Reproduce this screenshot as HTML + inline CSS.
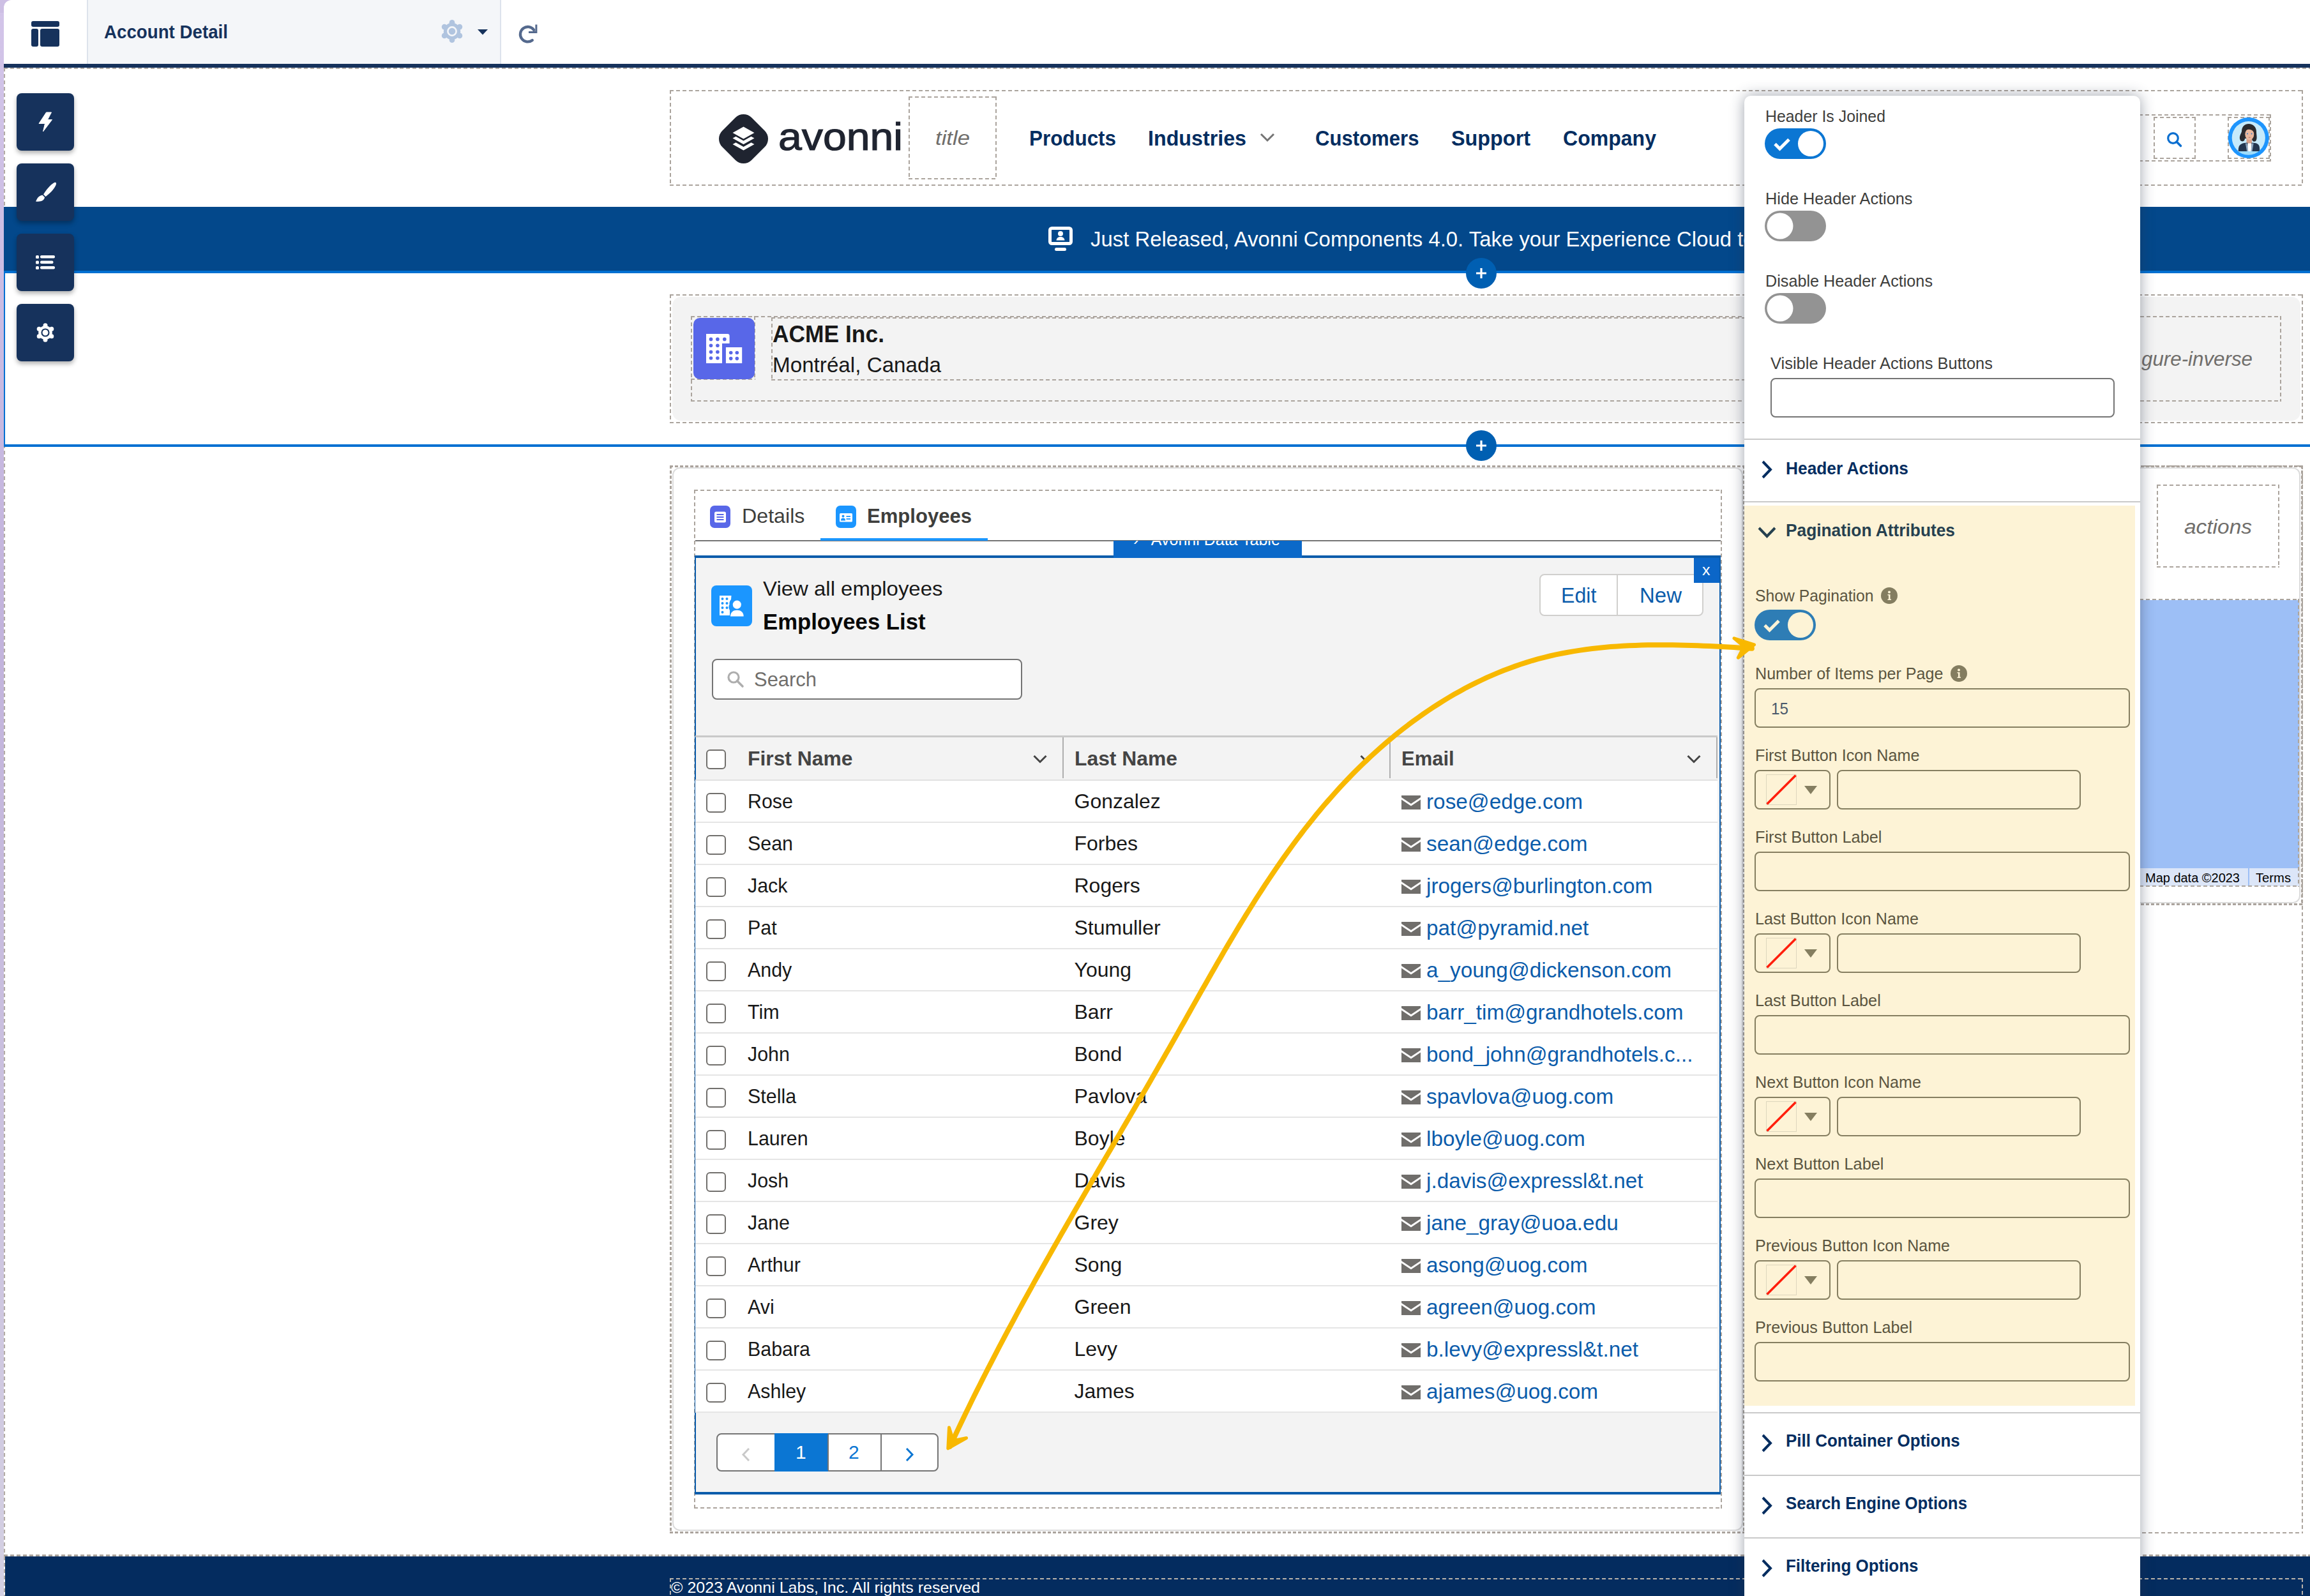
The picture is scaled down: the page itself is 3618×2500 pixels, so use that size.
<!DOCTYPE html>
<html><head><meta charset="utf-8"><style>
html,body{margin:0;padding:0;}
body{width:3618px;height:2500px;overflow:hidden;position:relative;background:#ffffff;font-family:"Liberation Sans", sans-serif;}
.tx{font-family:"Liberation Sans", sans-serif;}
</style></head><body>
<div style="position:absolute;left:0px;top:0px;width:6px;height:2500px;background:linear-gradient(180deg,#d3c5e9 0%,#c2b3dc 40%,#d4d0e2 100%);"></div>
<div style="position:absolute;left:0px;top:0px;width:20px;height:20px;background:#cdbfe4;"></div>
<div style="position:absolute;left:6px;top:0px;width:3612px;height:2500px;background:#ffffff;border-top-left-radius:12px;"></div>
<div style="position:absolute;left:136px;top:0px;width:649px;height:100px;background:#f4f6f9;border-left:2px solid #dde3ec;border-right:2px solid #dde3ec;box-sizing:border-box;"></div>
<div style="position:absolute;left:49px;top:33px;width:44px;height:9px;background:#16325c;border-radius:3px;"></div>
<div style="position:absolute;left:49px;top:45px;width:11px;height:28px;background:#16325c;border-radius:3px;"></div>
<div style="position:absolute;left:63px;top:45px;width:30px;height:28px;background:#16325c;border-radius:3px;"></div>
<div class="tx" style="position:absolute;left:163px;top:35.95px;font-size:29px;line-height:29px;color:#16325c;font-weight:bold;white-space:nowrap;transform-origin:0 0;transform:scaleX(0.9555);">Account Detail</div>
<svg style="position:absolute;left:688.5px;top:30px" width="38" height="38" viewBox="0 0 38 38"><g fill="#b0c4df"><circle cx="19" cy="19" r="13.2"/><circle cx="19.00" cy="5.20" r="4.3"/><circle cx="30.95" cy="12.10" r="4.3"/><circle cx="30.95" cy="25.90" r="4.3"/><circle cx="19.00" cy="32.80" r="4.3"/><circle cx="7.05" cy="25.90" r="4.3"/><circle cx="7.05" cy="12.10" r="4.3"/></g><circle cx="19" cy="19" r="6.6" fill="none" stroke="#f4f6f9" stroke-width="2.6"/></svg>
<svg style="position:absolute;left:748px;top:46px" width="16" height="9" viewBox="0 0 16 9"><path d="M0 0H16L8 8.5Z" fill="#16325c"/></svg>
<svg style="position:absolute;left:810px;top:36px" width="34" height="34" viewBox="0 0 34 34"><path d="M26.2 11 A11.7 11.7 0 1 0 23.8 26.97" fill="none" stroke="#54698d" stroke-width="4.3" stroke-linecap="round"/><path d="M28.4 2.6 H31.4 V16 H18 V13 H28.4 Z" fill="#54698d"/></svg>
<div style="position:absolute;left:6px;top:100px;width:3612px;height:6px;background:#16325c;"></div>
<div style="position:absolute;left:6px;top:106px;width:3700px;height:2500px;background:repeating-linear-gradient(90deg,#b3aca5 0 6px,transparent 6px 10px) 0 0/100% 2px no-repeat,repeating-linear-gradient(90deg,#b3aca5 0 6px,transparent 6px 10px) 0 100%/100% 2px no-repeat,repeating-linear-gradient(180deg,#b3aca5 0 6px,transparent 6px 10px) 0 0/2px 100% no-repeat,repeating-linear-gradient(180deg,#b3aca5 0 6px,transparent 6px 10px) 100% 0/2px 100% no-repeat;"></div>
<div style="position:absolute;left:26px;top:146px;width:90px;height:90px;background:#16325c;border-radius:8px;box-shadow:0 4px 7px rgba(0,0,0,0.3);z-index:5;"></div>
<div style="position:absolute;left:26px;top:256px;width:90px;height:90px;background:#16325c;border-radius:8px;box-shadow:0 4px 7px rgba(0,0,0,0.3);z-index:5;"></div>
<div style="position:absolute;left:26px;top:366px;width:90px;height:90px;background:#16325c;border-radius:8px;box-shadow:0 4px 7px rgba(0,0,0,0.3);z-index:5;"></div>
<div style="position:absolute;left:26px;top:476px;width:90px;height:90px;background:#16325c;border-radius:8px;box-shadow:0 4px 7px rgba(0,0,0,0.3);z-index:5;"></div>
<svg style="position:absolute;left:26px;top:146px;z-index:6" width="90" height="90" viewBox="0 0 90 90"><path d="M46.5 30 L54.5 30 L48.5 41.5 L55.5 41.5 L41.5 60 L44.5 47.5 L35 47.5 Z" fill="#fff" stroke="#fff" stroke-width="1" stroke-linejoin="round"/></svg>
<svg style="position:absolute;left:26px;top:256px;z-index:6" width="90" height="90" viewBox="0 0 90 90"><path d="M59 30 C62 29 63 31 61 35 C58 41 52 47 45.5 52 L42 48.5 C46 42 53 33 59 30 Z" fill="#fff"/><path d="M40.5 49.5 L44 53 C43.5 58 38 60.5 30 59.5 C32 56 33 51 40.5 49.5 Z" fill="#fff"/></svg>
<svg style="position:absolute;left:26px;top:366px;z-index:6" width="90" height="90" viewBox="0 0 90 90"><g fill="#fff"><rect x="30" y="34" width="5" height="5" rx="1.5"/><rect x="30" y="42.5" width="5" height="5" rx="1.5"/><rect x="30" y="51" width="5" height="5" rx="1.5"/><rect x="37" y="34" width="23" height="4.5" rx="2"/><rect x="37" y="42.5" width="20.5" height="4.5" rx="2"/><rect x="37" y="51" width="23" height="4.5" rx="2"/></g></svg>
<svg style="position:absolute;left:26px;top:476px;z-index:6" width="90" height="90" viewBox="0 0 90 90"><g fill="#fff"><circle cx="45" cy="45" r="10.8"/><circle cx="45.00" cy="33.70" r="3.5"/><circle cx="54.79" cy="39.35" r="3.5"/><circle cx="54.79" cy="50.65" r="3.5"/><circle cx="45.00" cy="56.30" r="3.5"/><circle cx="35.21" cy="50.65" r="3.5"/><circle cx="35.21" cy="39.35" r="3.5"/></g><circle cx="45" cy="45" r="5.55" fill="none" stroke="#16325c" stroke-width="2.1"/></svg>
<div style="position:absolute;left:1049px;top:141px;width:2558px;height:150px;background:repeating-linear-gradient(90deg,#aba49d 0 6px,transparent 6px 10px) 0 0/100% 2px no-repeat,repeating-linear-gradient(90deg,#aba49d 0 6px,transparent 6px 10px) 0 100%/100% 2px no-repeat,repeating-linear-gradient(180deg,#aba49d 0 6px,transparent 6px 10px) 0 0/2px 100% no-repeat,repeating-linear-gradient(180deg,#aba49d 0 6px,transparent 6px 10px) 100% 0/2px 100% no-repeat;"></div>
<svg style="position:absolute;left:1124px;top:178px" width="81" height="80" viewBox="0 0 81 80"><rect x="8" y="7" width="65" height="65" rx="18" transform="rotate(45 40.5 39.5)" fill="#1f2430"/>
<path d="M23.5 30 L40.5 20.5 L57.5 30 L40.5 39.5 Z" fill="#fff"/>
<path d="M23.5 38.5 L28.5 35.8 L40.5 42.6 L52.5 35.8 L57.5 38.5 L40.5 48 Z" fill="#fff"/>
<path d="M23.5 48 L28.5 45.3 L40.5 52.1 L52.5 45.3 L57.5 48 L40.5 57.5 Z" fill="#fff"/></svg>
<div class="tx" style="position:absolute;left:1218.5px;top:183.14px;font-size:61.5px;line-height:61.5px;color:#1f2430;font-weight:normal;white-space:nowrap;transform-origin:0 0;transform:scaleX(1.0760);-webkit-text-stroke:1.2px #1f2430;">avonni</div>
<div style="position:absolute;left:1423px;top:151px;width:138px;height:130px;background:repeating-linear-gradient(90deg,#aba49d 0 6px,transparent 6px 10px) 0 0/100% 2px no-repeat,repeating-linear-gradient(90deg,#aba49d 0 6px,transparent 6px 10px) 0 100%/100% 2px no-repeat,repeating-linear-gradient(180deg,#aba49d 0 6px,transparent 6px 10px) 0 0/2px 100% no-repeat,repeating-linear-gradient(180deg,#aba49d 0 6px,transparent 6px 10px) 100% 0/2px 100% no-repeat;"></div>
<div class="tx" style="position:absolute;left:1465px;top:200.76px;font-size:31px;line-height:31px;color:#706e6b;font-weight:normal;white-space:nowrap;transform-origin:0 0;transform:scaleX(1.1192);font-style:italic;">title</div>
<div class="tx" style="position:absolute;left:1612px;top:200.07px;font-size:33px;line-height:33px;color:#032d60;font-weight:bold;white-space:nowrap;transform-origin:0 0;transform:scaleX(0.9508);">Products</div>
<div class="tx" style="position:absolute;left:1798px;top:200.07px;font-size:33px;line-height:33px;color:#032d60;font-weight:bold;white-space:nowrap;transform-origin:0 0;transform:scaleX(0.9765);">Industries</div>
<div class="tx" style="position:absolute;left:2059.5px;top:200.07px;font-size:33px;line-height:33px;color:#032d60;font-weight:bold;white-space:nowrap;transform-origin:0 0;transform:scaleX(0.9426);">Customers</div>
<div class="tx" style="position:absolute;left:2273px;top:200.07px;font-size:33px;line-height:33px;color:#032d60;font-weight:bold;white-space:nowrap;transform-origin:0 0;transform:scaleX(0.9804);">Support</div>
<div class="tx" style="position:absolute;left:2448px;top:200.07px;font-size:33px;line-height:33px;color:#032d60;font-weight:bold;white-space:nowrap;transform-origin:0 0;transform:scaleX(0.9710);">Company</div>
<svg style="position:absolute;left:1972px;top:205px" width="26" height="21" viewBox="0 0 26 21"><path d="M3 5 L13 15 L23 5" fill="none" stroke="#747474" stroke-width="3"/></svg>
<div style="position:absolute;left:2900px;top:179px;width:657px;height:74px;background:repeating-linear-gradient(90deg,#aba49d 0 6px,transparent 6px 10px) 0 0/100% 2px no-repeat,repeating-linear-gradient(90deg,#aba49d 0 6px,transparent 6px 10px) 0 100%/100% 2px no-repeat,repeating-linear-gradient(180deg,#aba49d 0 6px,transparent 6px 10px) 0 0/2px 100% no-repeat,repeating-linear-gradient(180deg,#aba49d 0 6px,transparent 6px 10px) 100% 0/2px 100% no-repeat;"></div>
<div style="position:absolute;left:3373px;top:183px;width:66px;height:66px;background:repeating-linear-gradient(90deg,#aba49d 0 6px,transparent 6px 10px) 0 0/100% 2px no-repeat,repeating-linear-gradient(90deg,#aba49d 0 6px,transparent 6px 10px) 0 100%/100% 2px no-repeat,repeating-linear-gradient(180deg,#aba49d 0 6px,transparent 6px 10px) 0 0/2px 100% no-repeat,repeating-linear-gradient(180deg,#aba49d 0 6px,transparent 6px 10px) 100% 0/2px 100% no-repeat;"></div>
<svg style="position:absolute;left:3392px;top:205px" width="28" height="28" viewBox="0 0 28 28"><circle cx="11.5" cy="11.5" r="7.8" fill="none" stroke="#0b6fd0" stroke-width="3.2"/><path d="M17 17 L23.5 23.5" stroke="#0b6fd0" stroke-width="3.6" stroke-linecap="round"/></svg>
<div style="position:absolute;left:3489px;top:183px;width:66px;height:66px;background:repeating-linear-gradient(90deg,#aba49d 0 6px,transparent 6px 10px) 0 0/100% 2px no-repeat,repeating-linear-gradient(90deg,#aba49d 0 6px,transparent 6px 10px) 0 100%/100% 2px no-repeat,repeating-linear-gradient(180deg,#aba49d 0 6px,transparent 6px 10px) 0 0/2px 100% no-repeat,repeating-linear-gradient(180deg,#aba49d 0 6px,transparent 6px 10px) 100% 0/2px 100% no-repeat;"></div>
<svg style="position:absolute;left:3489px;top:184px" width="65" height="65" viewBox="0 0 65 65"><defs><clipPath id="avc"><circle cx="32.5" cy="32.5" r="26.3"/></clipPath></defs>
<circle cx="32.8" cy="32" r="32" fill="#1e95fd"/><circle cx="32.8" cy="32" r="26.1" fill="#c6eafb"/>
<g clip-path="url(#avc)"><rect x="0" y="52" width="65" height="13" fill="#9fdcfa"/>
<path d="M20 36 C17 30 21 26 22 22 C22 14 27 10 33 10 C40 10 45 15 45 22 C45 28 47 33 44 37 C41 39 38 37 38 33 L27 33 C27 37 23 39 20 36 Z" fill="#2a2a2e"/>
<rect x="29.5" y="32" width="8.5" height="9" fill="#d9a28b"/>
<ellipse cx="34.3" cy="26.3" rx="7" ry="9" fill="#e9b89e"/>
<path d="M26 23 C26 15 35 12 41.5 18.5 C40.5 22 41 25 42 28 C42 21 37 17.5 31 19 C28.5 19.8 27 21 26 23 Z" fill="#2a2a2e"/>
<circle cx="31" cy="25.5" r="1" fill="#2d7bd0"/><circle cx="37.6" cy="25.5" r="1" fill="#2d7bd0"/><ellipse cx="34.3" cy="31.3" rx="1.8" ry="0.9" fill="#c98a7c"/>
<path d="M16.8 53 C16.8 44 19 41.5 26 40 L31 39.5 L34.3 44 L37.6 39.5 L43 40 C49.5 41.5 50.3 44 50.3 53 Z" fill="#24364f"/>
<path d="M31.3 40.5 H37.5 V53 H31.3 Z" fill="#fff"/>
<path d="M29 40.5 L31.3 53 M39.5 40.5 L37.4 53" stroke="#8fa9c3" stroke-width="2.2"/></g></svg>
<div style="position:absolute;left:6px;top:324px;width:3612px;height:100px;background:#03488b;"></div>
<svg style="position:absolute;left:1640px;top:353px" width="42" height="42" viewBox="0 0 42 42"><rect x="4.5" y="4.5" width="33" height="24" rx="3" fill="none" stroke="#fff" stroke-width="5"/>
<circle cx="21" cy="13" r="4" fill="#fff"/><path d="M14.5 23.5 C15 19.5 17.5 18 21 18 C24.5 18 27 19.5 27.5 23.5 Z" fill="#fff"/><rect x="12" y="35" width="18" height="5" rx="2.5" fill="#fff"/></svg>
<div class="tx" style="position:absolute;left:1708px;top:357.77px;font-size:33px;line-height:33px;color:#ffffff;font-weight:normal;white-space:nowrap;transform-origin:0 0;transform:scaleX(0.9963);">Just Released, Avonni Components 4.0. Take your Experience Cloud to the next level</div>
<div style="position:absolute;left:6px;top:424px;width:3612px;height:276px;border-top:4px solid #0070d2;border-bottom:4px solid #0070d2;border-left:2px solid #0070d2;box-sizing:border-box;"></div>
<div style="position:absolute;left:1049px;top:461px;width:2558px;height:202px;background:repeating-linear-gradient(90deg,#aba49d 0 6px,transparent 6px 10px) 0 0/100% 2px no-repeat,repeating-linear-gradient(90deg,#aba49d 0 6px,transparent 6px 10px) 0 100%/100% 2px no-repeat,repeating-linear-gradient(180deg,#aba49d 0 6px,transparent 6px 10px) 0 0/2px 100% no-repeat,repeating-linear-gradient(180deg,#aba49d 0 6px,transparent 6px 10px) 100% 0/2px 100% no-repeat;"></div>
<div style="position:absolute;left:1053px;top:465px;width:2550px;height:194px;background:#f3f3f3;border-radius:14px;"></div>
<div style="position:absolute;left:1082px;top:495px;width:2491px;height:134px;background:repeating-linear-gradient(90deg,#aba49d 0 6px,transparent 6px 10px) 0 0/100% 2px no-repeat,repeating-linear-gradient(90deg,#aba49d 0 6px,transparent 6px 10px) 0 100%/100% 2px no-repeat,repeating-linear-gradient(180deg,#aba49d 0 6px,transparent 6px 10px) 0 0/2px 100% no-repeat,repeating-linear-gradient(180deg,#aba49d 0 6px,transparent 6px 10px) 100% 0/2px 100% no-repeat;"></div>
<div style="position:absolute;left:1082px;top:495px;width:101px;height:100px;background:repeating-linear-gradient(90deg,#aba49d 0 6px,transparent 6px 10px) 0 0/100% 2px no-repeat,repeating-linear-gradient(90deg,#aba49d 0 6px,transparent 6px 10px) 0 100%/100% 2px no-repeat,repeating-linear-gradient(180deg,#aba49d 0 6px,transparent 6px 10px) 0 0/2px 100% no-repeat,repeating-linear-gradient(180deg,#aba49d 0 6px,transparent 6px 10px) 100% 0/2px 100% no-repeat;"></div>
<div style="position:absolute;left:1086px;top:498px;width:96px;height:96px;background:#5867e8;border-radius:10px;"></div>
<svg style="position:absolute;left:1086px;top:498px" width="96" height="96" viewBox="0 0 96 96"><g fill="#fff"><path d="M20 25 H53.5 Q56.6 25 56.6 28 V40 H45 V71 H20 Z"/><rect x="50.9" y="46" width="25.3" height="25"/></g>
<g fill="#5867e8"><circle cx="27.5" cy="33.4" r="2.8"/><circle cx="37.9" cy="33.4" r="2.8"/><circle cx="48.8" cy="33.4" r="2.8"/><circle cx="27.5" cy="43.3" r="2.8"/><circle cx="37.9" cy="43.3" r="2.8"/><circle cx="27.5" cy="53.2" r="2.8"/><circle cx="37.9" cy="53.2" r="2.8"/><circle cx="27.5" cy="63" r="2.8"/><circle cx="37.9" cy="63" r="2.8"/><circle cx="58.7" cy="54.5" r="2.8"/><circle cx="68.3" cy="54.5" r="2.8"/><circle cx="58.7" cy="63.6" r="2.8"/><circle cx="68.3" cy="63.6" r="2.8"/></g></svg>
<div style="position:absolute;left:1208px;top:497px;width:2000px;height:99px;background:repeating-linear-gradient(90deg,#aba49d 0 6px,transparent 6px 10px) 0 0/100% 2px no-repeat,repeating-linear-gradient(90deg,#aba49d 0 6px,transparent 6px 10px) 0 100%/100% 2px no-repeat,repeating-linear-gradient(180deg,#aba49d 0 6px,transparent 6px 10px) 0 0/2px 100% no-repeat,repeating-linear-gradient(180deg,#aba49d 0 6px,transparent 6px 10px) 100% 0/2px 100% no-repeat;"></div>
<div class="tx" style="position:absolute;left:1210px;top:505.28px;font-size:37px;line-height:37px;color:#181818;font-weight:bold;white-space:nowrap;transform-origin:0 0;transform:scaleX(0.9564);">ACME Inc.</div>
<div class="tx" style="position:absolute;left:1210px;top:555.07px;font-size:33px;line-height:33px;color:#181818;font-weight:normal;white-space:nowrap;transform-origin:0 0;transform:scaleX(1.0064);">Montréal, Canada</div>
<div class="tx" style="position:absolute;left:3354px;top:546.76px;font-size:31px;line-height:31px;color:#706e6b;font-weight:normal;white-space:nowrap;transform-origin:0 0;transform:scaleX(1.0098);font-style:italic;">gure-inverse</div>
<div style="position:absolute;left:1049px;top:729px;width:1684px;height:1673px;background:repeating-linear-gradient(90deg,#aba49d 0 5px,transparent 5px 8px) 0 0/100% 3px no-repeat,repeating-linear-gradient(90deg,#aba49d 0 5px,transparent 5px 8px) 0 100%/100% 3px no-repeat,repeating-linear-gradient(180deg,#aba49d 0 5px,transparent 5px 8px) 0 0/3px 100% no-repeat,repeating-linear-gradient(180deg,#aba49d 0 5px,transparent 5px 8px) 100% 0/3px 100% no-repeat;"></div>
<div style="position:absolute;left:1053px;top:732px;width:1677px;height:1666px;background:#fff;border:2px solid #dcdcdc;border-radius:12px;box-sizing:border-box;"></div>
<div style="position:absolute;left:2745px;top:729px;width:862px;height:1673px;background:repeating-linear-gradient(90deg,#aba49d 0 6px,transparent 6px 10px) 0 0/100% 2px no-repeat,repeating-linear-gradient(90deg,#aba49d 0 6px,transparent 6px 10px) 0 100%/100% 2px no-repeat,repeating-linear-gradient(180deg,#aba49d 0 6px,transparent 6px 10px) 0 0/2px 100% no-repeat,repeating-linear-gradient(180deg,#aba49d 0 6px,transparent 6px 10px) 100% 0/2px 100% no-repeat;"></div>
<div style="position:absolute;left:2745px;top:729px;width:862px;height:689px;background:repeating-linear-gradient(90deg,#aba49d 0 5px,transparent 5px 8px) 0 0/100% 3px no-repeat,repeating-linear-gradient(90deg,#aba49d 0 5px,transparent 5px 8px) 0 100%/100% 3px no-repeat,repeating-linear-gradient(180deg,#aba49d 0 5px,transparent 5px 8px) 0 0/3px 100% no-repeat,repeating-linear-gradient(180deg,#aba49d 0 5px,transparent 5px 8px) 100% 0/3px 100% no-repeat;"></div>
<div style="position:absolute;left:2749px;top:732px;width:854px;height:683px;background:#fff;border:2px solid #dcdcdc;border-radius:12px;box-sizing:border-box;"></div>
<div style="position:absolute;left:3378px;top:759px;width:192px;height:130px;background:repeating-linear-gradient(90deg,#aba49d 0 6px,transparent 6px 10px) 0 0/100% 2px no-repeat,repeating-linear-gradient(90deg,#aba49d 0 6px,transparent 6px 10px) 0 100%/100% 2px no-repeat,repeating-linear-gradient(180deg,#aba49d 0 6px,transparent 6px 10px) 0 0/2px 100% no-repeat,repeating-linear-gradient(180deg,#aba49d 0 6px,transparent 6px 10px) 100% 0/2px 100% no-repeat;"></div>
<div class="tx" style="position:absolute;left:3421px;top:809.76px;font-size:31px;line-height:31px;color:#706e6b;font-weight:normal;white-space:nowrap;transform-origin:0 0;transform:scaleX(1.0791);font-style:italic;">actions</div>
<div style="position:absolute;left:2751px;top:940px;width:850px;height:420px;background:#9dbff6;"></div>
<div style="position:absolute;left:2751px;top:1360px;width:850px;height:28px;background:#dce6f8;"></div>
<div style="position:absolute;left:3521px;top:1360px;width:2px;height:28px;background:#9dbff6;"></div>
<div class="tx" style="position:absolute;left:3360px;top:1365.07px;font-size:20px;line-height:20px;color:#000;font-weight:normal;white-space:nowrap;transform-origin:0 0;transform:scaleX(0.9987);">Map data ©2023</div>
<div class="tx" style="position:absolute;left:3533px;top:1365.07px;font-size:20px;line-height:20px;color:#000;font-weight:normal;white-space:nowrap;transform-origin:0 0;transform:scaleX(1.0100);">Terms</div>
<div style="position:absolute;left:2751px;top:938px;width:850px;height:451px;background:repeating-linear-gradient(90deg,#aba49d 0 6px,transparent 6px 10px) 0 0/100% 2px no-repeat,repeating-linear-gradient(90deg,#aba49d 0 6px,transparent 6px 10px) 0 100%/100% 2px no-repeat,repeating-linear-gradient(180deg,#aba49d 0 6px,transparent 6px 10px) 0 0/2px 100% no-repeat,repeating-linear-gradient(180deg,#aba49d 0 6px,transparent 6px 10px) 100% 0/2px 100% no-repeat;"></div>
<div style="position:absolute;left:1087px;top:767px;width:1610px;height:1596px;background:repeating-linear-gradient(90deg,#aba49d 0 6px,transparent 6px 10px) 0 0/100% 2px no-repeat,repeating-linear-gradient(90deg,#aba49d 0 6px,transparent 6px 10px) 0 100%/100% 2px no-repeat,repeating-linear-gradient(180deg,#aba49d 0 6px,transparent 6px 10px) 0 0/2px 100% no-repeat,repeating-linear-gradient(180deg,#aba49d 0 6px,transparent 6px 10px) 100% 0/2px 100% no-repeat;"></div>
<div style="position:absolute;left:1112px;top:792px;width:32px;height:35px;background:#5867e8;border-radius:7px;"></div>
<svg style="position:absolute;left:1112px;top:792px" width="32" height="35" viewBox="0 0 32 35"><rect x="7" y="9.5" width="18" height="17" rx="2.5" fill="#fff"/><g fill="#5867e8"><rect x="10.5" y="13" width="11" height="2"/><rect x="10.5" y="17" width="11" height="2"/><rect x="10.5" y="21" width="11" height="2"/></g></svg>
<div class="tx" style="position:absolute;left:1161.6px;top:791.91px;font-size:32px;line-height:32px;color:#3e3e3c;font-weight:normal;white-space:nowrap;transform-origin:0 0;transform:scaleX(1.0060);">Details</div>
<div style="position:absolute;left:1309px;top:792px;width:32px;height:35px;background:#1b96ff;border-radius:7px;"></div>
<svg style="position:absolute;left:1309px;top:792px" width="32" height="35" viewBox="0 0 32 35"><rect x="6" y="12" width="20" height="13.5" rx="1.5" fill="#fff"/><g fill="#1b96ff"><circle cx="11.5" cy="16.5" r="2"/><path d="M8 23.5 C8 20 9.5 19.5 11.5 19.5 C13.5 19.5 15 20 15 23.5Z"/><rect x="16.5" y="16" width="6.5" height="1.8"/><rect x="16.5" y="20" width="6.5" height="1.8"/></g></svg>
<div class="tx" style="position:absolute;left:1358px;top:791.91px;font-size:32px;line-height:32px;color:#3e3e3c;font-weight:bold;white-space:nowrap;transform-origin:0 0;transform:scaleX(0.9706);">Employees</div>
<div style="position:absolute;left:1089px;top:846px;width:1606px;height:2px;background:#747474;"></div>
<div style="position:absolute;left:1285px;top:843px;width:262px;height:4px;background:#1b96ff;"></div>
<div style="position:absolute;left:1088px;top:870px;width:1607px;height:1471px;background:#f3f3f3;border:2px solid #0b5cab;border-top-width:4px;border-bottom-width:4px;box-sizing:border-box;"></div>
<div style="position:absolute;left:1744px;top:847px;width:295px;height:27px;overflow:hidden;background:#0b69c9;"><div style="position:absolute;left:31px;top:-17px;font-size:25px;line-height:30px;color:#fff;white-space:nowrap;">&#8250;&nbsp;&nbsp; Avonni Data Table</div></div>
<div style="position:absolute;left:1114px;top:917px;width:64px;height:64px;background:#1b96ff;border-radius:8px;"></div>
<svg style="position:absolute;left:1114px;top:917px" width="64" height="64" viewBox="0 0 64 64"><path d="M13 16 H31.5 L31 22 C29 24 28 27 28.5 30 C27 32 27 36 29 39 L29 47 H13 Z" fill="#fff"/>
<g fill="#1b96ff"><circle cx="17.5" cy="21" r="2"/><circle cx="24.5" cy="21" r="2"/><circle cx="17.5" cy="28" r="2"/><circle cx="24.5" cy="28" r="2"/><circle cx="17.5" cy="35" r="2"/><circle cx="24.5" cy="35" r="2"/><circle cx="17.5" cy="42" r="2"/></g>
<circle cx="40.3" cy="30.1" r="6.6" fill="#fff"/><path d="M30 48.5 C30 42 34.5 38.8 40.3 38.8 C46.1 38.8 50.7 42 50.7 48.5 Z" fill="#fff"/></svg>
<div class="tx" style="position:absolute;left:1194.5px;top:905.91px;font-size:32px;line-height:32px;color:#181818;font-weight:normal;white-space:nowrap;transform-origin:0 0;transform:scaleX(1.0299);">View all employees</div>
<div class="tx" style="position:absolute;left:1194.5px;top:956.07px;font-size:35px;line-height:35px;color:#080808;font-weight:bold;white-space:nowrap;transform-origin:0 0;transform:scaleX(0.9912);">Employees List</div>
<div style="position:absolute;left:2411px;top:899px;width:257px;height:66px;background:#fff;border:2px solid #d0cfcd;border-radius:8px;box-sizing:border-box;"></div>
<div style="position:absolute;left:2532px;top:900px;width:2px;height:64px;background:#d0cfcd;"></div>
<div class="tx" style="position:absolute;left:2444.6px;top:915.67px;font-size:33px;line-height:33px;color:#0b5cab;font-weight:normal;white-space:nowrap;transform-origin:0 0;transform:scaleX(0.9741);">Edit</div>
<div class="tx" style="position:absolute;left:2568px;top:915.67px;font-size:33px;line-height:33px;color:#0b5cab;font-weight:normal;white-space:nowrap;transform-origin:0 0;transform:scaleX(0.9995);">New</div>
<div style="position:absolute;left:2653px;top:874px;width:40px;height:39px;background:#0b66c8;"></div>
<div class="tx" style="position:absolute;left:2666px;top:881.18px;font-size:24px;line-height:24px;color:#fff;font-weight:normal;white-space:nowrap;transform-origin:0 0;transform:scaleX(1.0417);">x</div>
<div style="position:absolute;left:1115px;top:1032px;width:486px;height:64px;background:#fff;border:2px solid #747474;border-radius:8px;box-sizing:border-box;"></div>
<svg style="position:absolute;left:1137px;top:1049px" width="30" height="30" viewBox="0 0 30 30"><circle cx="12" cy="12" r="8" fill="none" stroke="#aeaeae" stroke-width="3.2"/><path d="M17.5 17.5 L26 26" stroke="#aeaeae" stroke-width="3.6" stroke-linecap="round"/></svg>
<div class="tx" style="position:absolute;left:1180.6px;top:1047.91px;font-size:32px;line-height:32px;color:#706e6b;font-weight:normal;white-space:nowrap;transform-origin:0 0;transform:scaleX(0.9666);">Search</div>
<div style="position:absolute;left:1089px;top:1152px;width:1601px;height:3px;background:#c9c9c9;"></div>
<div style="position:absolute;left:1089px;top:1221px;width:1601px;height:2px;background:#e1e1e1;"></div>
<div style="position:absolute;left:1664px;top:1155px;width:2px;height:64px;background:#aeaeae;"></div>
<div style="position:absolute;left:2176px;top:1155px;width:2px;height:64px;background:#aeaeae;"></div>
<div style="position:absolute;left:2688px;top:1155px;width:2px;height:64px;background:#aeaeae;"></div>
<div class="tx" style="position:absolute;left:1171px;top:1171.91px;font-size:32px;line-height:32px;color:#444444;font-weight:bold;white-space:nowrap;transform-origin:0 0;transform:scaleX(0.9946);">First Name</div>
<div class="tx" style="position:absolute;left:1682.5px;top:1171.91px;font-size:32px;line-height:32px;color:#444444;font-weight:bold;white-space:nowrap;transform-origin:0 0;transform:scaleX(0.9948);">Last Name</div>
<div class="tx" style="position:absolute;left:2195px;top:1171.91px;font-size:32px;line-height:32px;color:#444444;font-weight:bold;white-space:nowrap;transform-origin:0 0;transform:scaleX(0.9687);">Email</div>
<svg style="position:absolute;left:1618px;top:1182px" width="22" height="16" viewBox="0 0 22 16"><path d="M1.5 2 L11 11.5 L20.5 2" fill="none" stroke="#444" stroke-width="3"/></svg>
<svg style="position:absolute;left:2130px;top:1182px" width="22" height="16" viewBox="0 0 22 16"><path d="M1.5 2 L11 11.5 L20.5 2" fill="none" stroke="#444" stroke-width="3"/></svg>
<svg style="position:absolute;left:2642px;top:1182px" width="22" height="16" viewBox="0 0 22 16"><path d="M1.5 2 L11 11.5 L20.5 2" fill="none" stroke="#444" stroke-width="3"/></svg>
<div style="position:absolute;left:1106px;top:1174px;width:31px;height:31px;border:2px solid #716f6c;border-radius:6px;box-sizing:border-box;background:#fff;"></div>
<div style="position:absolute;left:1089px;top:1223px;width:1601px;height:64px;background:#fff;"></div>
<div style="position:absolute;left:1089px;top:1287px;width:1601px;height:2px;background:#e5e5e5;"></div>
<div style="position:absolute;left:1106px;top:1242px;width:31px;height:31px;border:2px solid #716f6c;border-radius:6px;box-sizing:border-box;background:#fff;"></div>
<div class="tx" style="position:absolute;left:1171px;top:1239.41px;font-size:32px;line-height:32px;color:#181818;font-weight:normal;white-space:nowrap;transform-origin:0 0;transform:scaleX(0.95);">Rose</div>
<div class="tx" style="position:absolute;left:1682.5px;top:1239.41px;font-size:32px;line-height:32px;color:#181818;font-weight:normal;white-space:nowrap;transform-origin:0 0;transform:scaleX(1.0);">Gonzalez</div>
<svg style="position:absolute;left:2195px;top:1246px" width="30" height="22" viewBox="0 0 30 22"><path d="M0 0 H30 V3 L15 13 L0 3 Z" fill="#706e6b"/><path d="M0 6.5 L15 16.5 L30 6.5 V22 H0 Z" fill="#706e6b"/></svg>
<div class="tx" style="position:absolute;left:2234px;top:1238.57px;font-size:33px;line-height:33px;color:#0b5cab;font-weight:normal;white-space:nowrap;transform-origin:0 0;transform:scaleX(1.01);">rose@edge.com</div>
<div style="position:absolute;left:1089px;top:1289px;width:1601px;height:64px;background:#fff;"></div>
<div style="position:absolute;left:1089px;top:1353px;width:1601px;height:2px;background:#e5e5e5;"></div>
<div style="position:absolute;left:1106px;top:1308px;width:31px;height:31px;border:2px solid #716f6c;border-radius:6px;box-sizing:border-box;background:#fff;"></div>
<div class="tx" style="position:absolute;left:1171px;top:1305.41px;font-size:32px;line-height:32px;color:#181818;font-weight:normal;white-space:nowrap;transform-origin:0 0;transform:scaleX(0.95);">Sean</div>
<div class="tx" style="position:absolute;left:1682.5px;top:1305.41px;font-size:32px;line-height:32px;color:#181818;font-weight:normal;white-space:nowrap;transform-origin:0 0;transform:scaleX(1.0);">Forbes</div>
<svg style="position:absolute;left:2195px;top:1312px" width="30" height="22" viewBox="0 0 30 22"><path d="M0 0 H30 V3 L15 13 L0 3 Z" fill="#706e6b"/><path d="M0 6.5 L15 16.5 L30 6.5 V22 H0 Z" fill="#706e6b"/></svg>
<div class="tx" style="position:absolute;left:2234px;top:1304.57px;font-size:33px;line-height:33px;color:#0b5cab;font-weight:normal;white-space:nowrap;transform-origin:0 0;transform:scaleX(1.01);">sean@edge.com</div>
<div style="position:absolute;left:1089px;top:1355px;width:1601px;height:64px;background:#fff;"></div>
<div style="position:absolute;left:1089px;top:1419px;width:1601px;height:2px;background:#e5e5e5;"></div>
<div style="position:absolute;left:1106px;top:1374px;width:31px;height:31px;border:2px solid #716f6c;border-radius:6px;box-sizing:border-box;background:#fff;"></div>
<div class="tx" style="position:absolute;left:1171px;top:1371.41px;font-size:32px;line-height:32px;color:#181818;font-weight:normal;white-space:nowrap;transform-origin:0 0;transform:scaleX(0.95);">Jack</div>
<div class="tx" style="position:absolute;left:1682.5px;top:1371.41px;font-size:32px;line-height:32px;color:#181818;font-weight:normal;white-space:nowrap;transform-origin:0 0;transform:scaleX(1.0);">Rogers</div>
<svg style="position:absolute;left:2195px;top:1378px" width="30" height="22" viewBox="0 0 30 22"><path d="M0 0 H30 V3 L15 13 L0 3 Z" fill="#706e6b"/><path d="M0 6.5 L15 16.5 L30 6.5 V22 H0 Z" fill="#706e6b"/></svg>
<div class="tx" style="position:absolute;left:2234px;top:1370.57px;font-size:33px;line-height:33px;color:#0b5cab;font-weight:normal;white-space:nowrap;transform-origin:0 0;transform:scaleX(1.01);">jrogers@burlington.com</div>
<div style="position:absolute;left:1089px;top:1421px;width:1601px;height:64px;background:#fff;"></div>
<div style="position:absolute;left:1089px;top:1485px;width:1601px;height:2px;background:#e5e5e5;"></div>
<div style="position:absolute;left:1106px;top:1440px;width:31px;height:31px;border:2px solid #716f6c;border-radius:6px;box-sizing:border-box;background:#fff;"></div>
<div class="tx" style="position:absolute;left:1171px;top:1437.41px;font-size:32px;line-height:32px;color:#181818;font-weight:normal;white-space:nowrap;transform-origin:0 0;transform:scaleX(0.95);">Pat</div>
<div class="tx" style="position:absolute;left:1682.5px;top:1437.41px;font-size:32px;line-height:32px;color:#181818;font-weight:normal;white-space:nowrap;transform-origin:0 0;transform:scaleX(1.0);">Stumuller</div>
<svg style="position:absolute;left:2195px;top:1444px" width="30" height="22" viewBox="0 0 30 22"><path d="M0 0 H30 V3 L15 13 L0 3 Z" fill="#706e6b"/><path d="M0 6.5 L15 16.5 L30 6.5 V22 H0 Z" fill="#706e6b"/></svg>
<div class="tx" style="position:absolute;left:2234px;top:1436.57px;font-size:33px;line-height:33px;color:#0b5cab;font-weight:normal;white-space:nowrap;transform-origin:0 0;transform:scaleX(1.01);">pat@pyramid.net</div>
<div style="position:absolute;left:1089px;top:1487px;width:1601px;height:64px;background:#fff;"></div>
<div style="position:absolute;left:1089px;top:1551px;width:1601px;height:2px;background:#e5e5e5;"></div>
<div style="position:absolute;left:1106px;top:1506px;width:31px;height:31px;border:2px solid #716f6c;border-radius:6px;box-sizing:border-box;background:#fff;"></div>
<div class="tx" style="position:absolute;left:1171px;top:1503.41px;font-size:32px;line-height:32px;color:#181818;font-weight:normal;white-space:nowrap;transform-origin:0 0;transform:scaleX(0.95);">Andy</div>
<div class="tx" style="position:absolute;left:1682.5px;top:1503.41px;font-size:32px;line-height:32px;color:#181818;font-weight:normal;white-space:nowrap;transform-origin:0 0;transform:scaleX(1.0);">Young</div>
<svg style="position:absolute;left:2195px;top:1510px" width="30" height="22" viewBox="0 0 30 22"><path d="M0 0 H30 V3 L15 13 L0 3 Z" fill="#706e6b"/><path d="M0 6.5 L15 16.5 L30 6.5 V22 H0 Z" fill="#706e6b"/></svg>
<div class="tx" style="position:absolute;left:2234px;top:1502.57px;font-size:33px;line-height:33px;color:#0b5cab;font-weight:normal;white-space:nowrap;transform-origin:0 0;transform:scaleX(1.01);">a_young@dickenson.com</div>
<div style="position:absolute;left:1089px;top:1553px;width:1601px;height:64px;background:#fff;"></div>
<div style="position:absolute;left:1089px;top:1617px;width:1601px;height:2px;background:#e5e5e5;"></div>
<div style="position:absolute;left:1106px;top:1572px;width:31px;height:31px;border:2px solid #716f6c;border-radius:6px;box-sizing:border-box;background:#fff;"></div>
<div class="tx" style="position:absolute;left:1171px;top:1569.41px;font-size:32px;line-height:32px;color:#181818;font-weight:normal;white-space:nowrap;transform-origin:0 0;transform:scaleX(0.95);">Tim</div>
<div class="tx" style="position:absolute;left:1682.5px;top:1569.41px;font-size:32px;line-height:32px;color:#181818;font-weight:normal;white-space:nowrap;transform-origin:0 0;transform:scaleX(1.0);">Barr</div>
<svg style="position:absolute;left:2195px;top:1576px" width="30" height="22" viewBox="0 0 30 22"><path d="M0 0 H30 V3 L15 13 L0 3 Z" fill="#706e6b"/><path d="M0 6.5 L15 16.5 L30 6.5 V22 H0 Z" fill="#706e6b"/></svg>
<div class="tx" style="position:absolute;left:2234px;top:1568.57px;font-size:33px;line-height:33px;color:#0b5cab;font-weight:normal;white-space:nowrap;transform-origin:0 0;transform:scaleX(1.01);">barr_tim@grandhotels.com</div>
<div style="position:absolute;left:1089px;top:1619px;width:1601px;height:64px;background:#fff;"></div>
<div style="position:absolute;left:1089px;top:1683px;width:1601px;height:2px;background:#e5e5e5;"></div>
<div style="position:absolute;left:1106px;top:1638px;width:31px;height:31px;border:2px solid #716f6c;border-radius:6px;box-sizing:border-box;background:#fff;"></div>
<div class="tx" style="position:absolute;left:1171px;top:1635.41px;font-size:32px;line-height:32px;color:#181818;font-weight:normal;white-space:nowrap;transform-origin:0 0;transform:scaleX(0.95);">John</div>
<div class="tx" style="position:absolute;left:1682.5px;top:1635.41px;font-size:32px;line-height:32px;color:#181818;font-weight:normal;white-space:nowrap;transform-origin:0 0;transform:scaleX(1.0);">Bond</div>
<svg style="position:absolute;left:2195px;top:1642px" width="30" height="22" viewBox="0 0 30 22"><path d="M0 0 H30 V3 L15 13 L0 3 Z" fill="#706e6b"/><path d="M0 6.5 L15 16.5 L30 6.5 V22 H0 Z" fill="#706e6b"/></svg>
<div class="tx" style="position:absolute;left:2234px;top:1634.57px;font-size:33px;line-height:33px;color:#0b5cab;font-weight:normal;white-space:nowrap;transform-origin:0 0;transform:scaleX(1.01);">bond_john@grandhotels.c...</div>
<div style="position:absolute;left:1089px;top:1685px;width:1601px;height:64px;background:#fff;"></div>
<div style="position:absolute;left:1089px;top:1749px;width:1601px;height:2px;background:#e5e5e5;"></div>
<div style="position:absolute;left:1106px;top:1704px;width:31px;height:31px;border:2px solid #716f6c;border-radius:6px;box-sizing:border-box;background:#fff;"></div>
<div class="tx" style="position:absolute;left:1171px;top:1701.41px;font-size:32px;line-height:32px;color:#181818;font-weight:normal;white-space:nowrap;transform-origin:0 0;transform:scaleX(0.95);">Stella</div>
<div class="tx" style="position:absolute;left:1682.5px;top:1701.41px;font-size:32px;line-height:32px;color:#181818;font-weight:normal;white-space:nowrap;transform-origin:0 0;transform:scaleX(1.0);">Pavlova</div>
<svg style="position:absolute;left:2195px;top:1708px" width="30" height="22" viewBox="0 0 30 22"><path d="M0 0 H30 V3 L15 13 L0 3 Z" fill="#706e6b"/><path d="M0 6.5 L15 16.5 L30 6.5 V22 H0 Z" fill="#706e6b"/></svg>
<div class="tx" style="position:absolute;left:2234px;top:1700.57px;font-size:33px;line-height:33px;color:#0b5cab;font-weight:normal;white-space:nowrap;transform-origin:0 0;transform:scaleX(1.01);">spavlova@uog.com</div>
<div style="position:absolute;left:1089px;top:1751px;width:1601px;height:64px;background:#fff;"></div>
<div style="position:absolute;left:1089px;top:1815px;width:1601px;height:2px;background:#e5e5e5;"></div>
<div style="position:absolute;left:1106px;top:1770px;width:31px;height:31px;border:2px solid #716f6c;border-radius:6px;box-sizing:border-box;background:#fff;"></div>
<div class="tx" style="position:absolute;left:1171px;top:1767.41px;font-size:32px;line-height:32px;color:#181818;font-weight:normal;white-space:nowrap;transform-origin:0 0;transform:scaleX(0.95);">Lauren</div>
<div class="tx" style="position:absolute;left:1682.5px;top:1767.41px;font-size:32px;line-height:32px;color:#181818;font-weight:normal;white-space:nowrap;transform-origin:0 0;transform:scaleX(1.0);">Boyle</div>
<svg style="position:absolute;left:2195px;top:1774px" width="30" height="22" viewBox="0 0 30 22"><path d="M0 0 H30 V3 L15 13 L0 3 Z" fill="#706e6b"/><path d="M0 6.5 L15 16.5 L30 6.5 V22 H0 Z" fill="#706e6b"/></svg>
<div class="tx" style="position:absolute;left:2234px;top:1766.57px;font-size:33px;line-height:33px;color:#0b5cab;font-weight:normal;white-space:nowrap;transform-origin:0 0;transform:scaleX(1.01);">lboyle@uog.com</div>
<div style="position:absolute;left:1089px;top:1817px;width:1601px;height:64px;background:#fff;"></div>
<div style="position:absolute;left:1089px;top:1881px;width:1601px;height:2px;background:#e5e5e5;"></div>
<div style="position:absolute;left:1106px;top:1836px;width:31px;height:31px;border:2px solid #716f6c;border-radius:6px;box-sizing:border-box;background:#fff;"></div>
<div class="tx" style="position:absolute;left:1171px;top:1833.41px;font-size:32px;line-height:32px;color:#181818;font-weight:normal;white-space:nowrap;transform-origin:0 0;transform:scaleX(0.95);">Josh</div>
<div class="tx" style="position:absolute;left:1682.5px;top:1833.41px;font-size:32px;line-height:32px;color:#181818;font-weight:normal;white-space:nowrap;transform-origin:0 0;transform:scaleX(1.0);">Davis</div>
<svg style="position:absolute;left:2195px;top:1840px" width="30" height="22" viewBox="0 0 30 22"><path d="M0 0 H30 V3 L15 13 L0 3 Z" fill="#706e6b"/><path d="M0 6.5 L15 16.5 L30 6.5 V22 H0 Z" fill="#706e6b"/></svg>
<div class="tx" style="position:absolute;left:2234px;top:1832.57px;font-size:33px;line-height:33px;color:#0b5cab;font-weight:normal;white-space:nowrap;transform-origin:0 0;transform:scaleX(1.01);">j.davis@expressl&amp;t.net</div>
<div style="position:absolute;left:1089px;top:1883px;width:1601px;height:64px;background:#fff;"></div>
<div style="position:absolute;left:1089px;top:1947px;width:1601px;height:2px;background:#e5e5e5;"></div>
<div style="position:absolute;left:1106px;top:1902px;width:31px;height:31px;border:2px solid #716f6c;border-radius:6px;box-sizing:border-box;background:#fff;"></div>
<div class="tx" style="position:absolute;left:1171px;top:1899.41px;font-size:32px;line-height:32px;color:#181818;font-weight:normal;white-space:nowrap;transform-origin:0 0;transform:scaleX(0.95);">Jane</div>
<div class="tx" style="position:absolute;left:1682.5px;top:1899.41px;font-size:32px;line-height:32px;color:#181818;font-weight:normal;white-space:nowrap;transform-origin:0 0;transform:scaleX(1.0);">Grey</div>
<svg style="position:absolute;left:2195px;top:1906px" width="30" height="22" viewBox="0 0 30 22"><path d="M0 0 H30 V3 L15 13 L0 3 Z" fill="#706e6b"/><path d="M0 6.5 L15 16.5 L30 6.5 V22 H0 Z" fill="#706e6b"/></svg>
<div class="tx" style="position:absolute;left:2234px;top:1898.57px;font-size:33px;line-height:33px;color:#0b5cab;font-weight:normal;white-space:nowrap;transform-origin:0 0;transform:scaleX(1.01);">jane_gray@uoa.edu</div>
<div style="position:absolute;left:1089px;top:1949px;width:1601px;height:64px;background:#fff;"></div>
<div style="position:absolute;left:1089px;top:2013px;width:1601px;height:2px;background:#e5e5e5;"></div>
<div style="position:absolute;left:1106px;top:1968px;width:31px;height:31px;border:2px solid #716f6c;border-radius:6px;box-sizing:border-box;background:#fff;"></div>
<div class="tx" style="position:absolute;left:1171px;top:1965.41px;font-size:32px;line-height:32px;color:#181818;font-weight:normal;white-space:nowrap;transform-origin:0 0;transform:scaleX(0.95);">Arthur</div>
<div class="tx" style="position:absolute;left:1682.5px;top:1965.41px;font-size:32px;line-height:32px;color:#181818;font-weight:normal;white-space:nowrap;transform-origin:0 0;transform:scaleX(1.0);">Song</div>
<svg style="position:absolute;left:2195px;top:1972px" width="30" height="22" viewBox="0 0 30 22"><path d="M0 0 H30 V3 L15 13 L0 3 Z" fill="#706e6b"/><path d="M0 6.5 L15 16.5 L30 6.5 V22 H0 Z" fill="#706e6b"/></svg>
<div class="tx" style="position:absolute;left:2234px;top:1964.57px;font-size:33px;line-height:33px;color:#0b5cab;font-weight:normal;white-space:nowrap;transform-origin:0 0;transform:scaleX(1.01);">asong@uog.com</div>
<div style="position:absolute;left:1089px;top:2015px;width:1601px;height:64px;background:#fff;"></div>
<div style="position:absolute;left:1089px;top:2079px;width:1601px;height:2px;background:#e5e5e5;"></div>
<div style="position:absolute;left:1106px;top:2034px;width:31px;height:31px;border:2px solid #716f6c;border-radius:6px;box-sizing:border-box;background:#fff;"></div>
<div class="tx" style="position:absolute;left:1171px;top:2031.41px;font-size:32px;line-height:32px;color:#181818;font-weight:normal;white-space:nowrap;transform-origin:0 0;transform:scaleX(0.95);">Avi</div>
<div class="tx" style="position:absolute;left:1682.5px;top:2031.41px;font-size:32px;line-height:32px;color:#181818;font-weight:normal;white-space:nowrap;transform-origin:0 0;transform:scaleX(1.0);">Green</div>
<svg style="position:absolute;left:2195px;top:2038px" width="30" height="22" viewBox="0 0 30 22"><path d="M0 0 H30 V3 L15 13 L0 3 Z" fill="#706e6b"/><path d="M0 6.5 L15 16.5 L30 6.5 V22 H0 Z" fill="#706e6b"/></svg>
<div class="tx" style="position:absolute;left:2234px;top:2030.57px;font-size:33px;line-height:33px;color:#0b5cab;font-weight:normal;white-space:nowrap;transform-origin:0 0;transform:scaleX(1.01);">agreen@uog.com</div>
<div style="position:absolute;left:1089px;top:2081px;width:1601px;height:64px;background:#fff;"></div>
<div style="position:absolute;left:1089px;top:2145px;width:1601px;height:2px;background:#e5e5e5;"></div>
<div style="position:absolute;left:1106px;top:2100px;width:31px;height:31px;border:2px solid #716f6c;border-radius:6px;box-sizing:border-box;background:#fff;"></div>
<div class="tx" style="position:absolute;left:1171px;top:2097.41px;font-size:32px;line-height:32px;color:#181818;font-weight:normal;white-space:nowrap;transform-origin:0 0;transform:scaleX(0.95);">Babara</div>
<div class="tx" style="position:absolute;left:1682.5px;top:2097.41px;font-size:32px;line-height:32px;color:#181818;font-weight:normal;white-space:nowrap;transform-origin:0 0;transform:scaleX(1.0);">Levy</div>
<svg style="position:absolute;left:2195px;top:2104px" width="30" height="22" viewBox="0 0 30 22"><path d="M0 0 H30 V3 L15 13 L0 3 Z" fill="#706e6b"/><path d="M0 6.5 L15 16.5 L30 6.5 V22 H0 Z" fill="#706e6b"/></svg>
<div class="tx" style="position:absolute;left:2234px;top:2096.57px;font-size:33px;line-height:33px;color:#0b5cab;font-weight:normal;white-space:nowrap;transform-origin:0 0;transform:scaleX(1.01);">b.levy@expressl&amp;t.net</div>
<div style="position:absolute;left:1089px;top:2147px;width:1601px;height:64px;background:#fff;"></div>
<div style="position:absolute;left:1089px;top:2211px;width:1601px;height:2px;background:#e5e5e5;"></div>
<div style="position:absolute;left:1106px;top:2166px;width:31px;height:31px;border:2px solid #716f6c;border-radius:6px;box-sizing:border-box;background:#fff;"></div>
<div class="tx" style="position:absolute;left:1171px;top:2163.41px;font-size:32px;line-height:32px;color:#181818;font-weight:normal;white-space:nowrap;transform-origin:0 0;transform:scaleX(0.95);">Ashley</div>
<div class="tx" style="position:absolute;left:1682.5px;top:2163.41px;font-size:32px;line-height:32px;color:#181818;font-weight:normal;white-space:nowrap;transform-origin:0 0;transform:scaleX(1.0);">James</div>
<svg style="position:absolute;left:2195px;top:2170px" width="30" height="22" viewBox="0 0 30 22"><path d="M0 0 H30 V3 L15 13 L0 3 Z" fill="#706e6b"/><path d="M0 6.5 L15 16.5 L30 6.5 V22 H0 Z" fill="#706e6b"/></svg>
<div class="tx" style="position:absolute;left:2234px;top:2162.57px;font-size:33px;line-height:33px;color:#0b5cab;font-weight:normal;white-space:nowrap;transform-origin:0 0;transform:scaleX(1.01);">ajames@uog.com</div>
<div style="position:absolute;left:1122px;top:2245px;width:348px;height:60px;background:#fff;border:2px solid #747474;border-radius:8px;box-sizing:border-box;"></div>
<div style="position:absolute;left:1213px;top:2245px;width:84px;height:60px;background:#0b76d3;"></div>
<div style="position:absolute;left:1296px;top:2247px;width:2px;height:56px;background:#747474;"></div>
<div style="position:absolute;left:1379px;top:2247px;width:2px;height:56px;background:#747474;"></div>
<svg style="position:absolute;left:1159px;top:2265px" width="20" height="28" viewBox="0 0 20 28"><path d="M14 4 L5 13.5 L14 23" fill="none" stroke="#c9c9c9" stroke-width="3"/></svg>
<div class="tx" style="position:absolute;left:1246px;top:2260.11px;font-size:30px;line-height:30px;color:#fff;font-weight:normal;white-space:nowrap;transform-origin:0 0;">1</div>
<div class="tx" style="position:absolute;left:1329px;top:2260.11px;font-size:30px;line-height:30px;color:#0b76d3;font-weight:normal;white-space:nowrap;transform-origin:0 0;">2</div>
<svg style="position:absolute;left:1415px;top:2265px" width="20" height="28" viewBox="0 0 20 28"><path d="M5 4 L14 13.5 L5 23" fill="none" stroke="#0b76d3" stroke-width="3"/></svg>
<div style="position:absolute;left:6px;top:2435px;width:3612px;height:3px;background:repeating-linear-gradient(90deg,#aba49d 0 6px,transparent 6px 10px) 0 0/100% 3px no-repeat,repeating-linear-gradient(90deg,#aba49d 0 6px,transparent 6px 10px) 0 100%/100% 3px no-repeat,repeating-linear-gradient(180deg,#aba49d 0 6px,transparent 6px 10px) 0 0/3px 100% no-repeat,repeating-linear-gradient(180deg,#aba49d 0 6px,transparent 6px 10px) 100% 0/3px 100% no-repeat;"></div>
<div style="position:absolute;left:8px;top:2438px;width:3610px;height:62px;background:#042c5f;"></div>
<div style="position:absolute;left:6px;top:2438px;width:2px;height:62px;background:repeating-linear-gradient(180deg,#b3aca5 0 6px,#fff 6px 10px);"></div>
<div style="position:absolute;left:1049px;top:2472px;width:2558px;height:40px;background:repeating-linear-gradient(90deg,#b9b2aa 0 6px,transparent 6px 10px) 0 0/100% 2px no-repeat,repeating-linear-gradient(90deg,#b9b2aa 0 6px,transparent 6px 10px) 0 100%/100% 2px no-repeat,repeating-linear-gradient(180deg,#b9b2aa 0 6px,transparent 6px 10px) 0 0/2px 100% no-repeat,repeating-linear-gradient(180deg,#b9b2aa 0 6px,transparent 6px 10px) 100% 0/2px 100% no-repeat;"></div>
<div class="tx" style="position:absolute;left:1051.4px;top:2475.28px;font-size:24px;line-height:24px;color:#ffffff;font-weight:normal;white-space:nowrap;transform-origin:0 0;transform:scaleX(1.0427);">© 2023 Avonni Labs, Inc. All rights reserved</div>
<svg style="position:absolute;left:2296px;top:404px;z-index:8" width="48" height="48" viewBox="0 0 48 48"><circle cx="24" cy="24" r="24" fill="#005fb2"/><path d="M24 16 V32 M16 24 H32" stroke="#fff" stroke-width="3.2"/></svg>
<svg style="position:absolute;left:2296px;top:674px;z-index:8" width="48" height="48" viewBox="0 0 48 48"><circle cx="24" cy="24" r="24" fill="#005fb2"/><path d="M24 16 V32 M16 24 H32" stroke="#fff" stroke-width="3.2"/></svg>
<div style="position:absolute;left:2732px;top:150px;width:620px;height:2400px;background:#fff;border-radius:10px 10px 0 0;box-shadow:0 0 22px rgba(40,50,70,0.45);z-index:20;"></div>
<div class="tx" style="position:absolute;left:2765px;top:170.34px;font-size:25px;line-height:25px;color:#3e3e3c;font-weight:normal;white-space:nowrap;transform-origin:0 0;transform:scaleX(0.9946);z-index:21;">Header Is Joined</div>
<svg style="position:absolute;left:2764px;top:201px;z-index:21;" width="96" height="48" viewBox="0 0 96 48"><rect x="0" y="0" width="96" height="48" rx="24" fill="#0b76d3"/><circle cx="72" cy="24" r="20" fill="#fff"/><path d="M16 24.5 L23.5 32 L38 17.5" fill="none" stroke="#fff" stroke-width="5"/></svg>
<div class="tx" style="position:absolute;left:2765px;top:298.84px;font-size:25px;line-height:25px;color:#3e3e3c;font-weight:normal;white-space:nowrap;transform-origin:0 0;transform:scaleX(1.0114);z-index:21;">Hide Header Actions</div>
<svg style="position:absolute;left:2764px;top:330px;z-index:21;" width="96" height="48" viewBox="0 0 96 48"><rect x="0" y="0" width="96" height="48" rx="24" fill="#939393"/><circle cx="24" cy="24" r="20.5" fill="#fff"/></svg>
<div class="tx" style="position:absolute;left:2765px;top:427.84px;font-size:25px;line-height:25px;color:#3e3e3c;font-weight:normal;white-space:nowrap;transform-origin:0 0;transform:scaleX(1.0082);z-index:21;">Disable Header Actions</div>
<svg style="position:absolute;left:2764px;top:459px;z-index:21;" width="96" height="48" viewBox="0 0 96 48"><rect x="0" y="0" width="96" height="48" rx="24" fill="#939393"/><circle cx="24" cy="24" r="20.5" fill="#fff"/></svg>
<div class="tx" style="position:absolute;left:2772.7px;top:556.84px;font-size:25px;line-height:25px;color:#3e3e3c;font-weight:normal;white-space:nowrap;transform-origin:0 0;transform:scaleX(1.0193);z-index:21;">Visible Header Actions Buttons</div>
<div style="position:absolute;left:2773px;top:592px;width:539px;height:62px;background:#fff;border:2px solid #747474;border-radius:8px;box-sizing:border-box;z-index:21;"></div>
<div style="position:absolute;left:2732px;top:687px;width:620px;height:2px;background:#c9c9c9;z-index:21;"></div>
<svg style="position:absolute;left:2756px;top:720px;z-index:21;" width="24" height="32" viewBox="0 0 24 32"><path d="M5 3 L17 15.5 L5 28" fill="none" stroke="#032d60" stroke-width="4"/></svg>
<div class="tx" style="position:absolute;left:2797px;top:720.74px;font-size:27px;line-height:27px;color:#032d60;font-weight:bold;white-space:nowrap;transform-origin:0 0;transform:scaleX(0.9743);z-index:21;">Header Actions</div>
<div style="position:absolute;left:2732px;top:785px;width:620px;height:2px;background:#c9c9c9;z-index:21;"></div>
<div style="position:absolute;left:2732px;top:792px;width:612px;height:1410px;background:#fdf3d6;z-index:21;"></div>
<svg style="position:absolute;left:2752px;top:822px;z-index:21;" width="32" height="24" viewBox="0 0 32 24"><path d="M3 5 L15.5 18 L28 5" fill="none" stroke="#26404f" stroke-width="4"/></svg>
<div class="tx" style="position:absolute;left:2797px;top:818.14px;font-size:27px;line-height:27px;color:#26404f;font-weight:bold;white-space:nowrap;transform-origin:0 0;transform:scaleX(0.9742);z-index:21;">Pagination Attributes</div>
<div class="tx" style="position:absolute;left:2748.5px;top:920.84px;font-size:25px;line-height:25px;color:#5b5540;font-weight:normal;white-space:nowrap;transform-origin:0 0;transform:scaleX(0.9886);z-index:21;">Show Pagination</div>
<svg style="position:absolute;left:2946px;top:920px;z-index:21;" width="26" height="26" viewBox="0 0 26 26"><circle cx="13" cy="13" r="13" fill="#847d60"/><circle cx="13" cy="7.5" r="2" fill="#fdf3d6"/><path d="M10.5 11 H14.5 V18.5 H16 V20 H10.5 V18.5 H12 V12.5 H10.5 Z" fill="#fdf3d6"/></svg>
<svg style="position:absolute;left:2748px;top:955px;z-index:21;" width="96" height="48" viewBox="0 0 96 48"><rect x="0" y="0" width="96" height="48" rx="24" fill="#2e7db5"/><circle cx="72" cy="24" r="20" fill="#fdf3d6"/><path d="M16 24.5 L23.5 32 L38 17.5" fill="none" stroke="#fdf3d6" stroke-width="5"/></svg>
<div class="tx" style="position:absolute;left:2748.5px;top:1042.84px;font-size:25px;line-height:25px;color:#5b5540;font-weight:normal;white-space:nowrap;transform-origin:0 0;transform:scaleX(1.0044);z-index:21;">Number of Items per Page</div>
<svg style="position:absolute;left:3055px;top:1042px;z-index:21;" width="26" height="26" viewBox="0 0 26 26"><circle cx="13" cy="13" r="13" fill="#847d60"/><circle cx="13" cy="7.5" r="2" fill="#fdf3d6"/><path d="M10.5 11 H14.5 V18.5 H16 V20 H10.5 V18.5 H12 V12.5 H10.5 Z" fill="#fdf3d6"/></svg>
<div style="position:absolute;left:2748px;top:1078px;width:588px;height:62px;border:2px solid #857e60;border-radius:8px;box-sizing:border-box;z-index:21;"></div>
<div class="tx" style="position:absolute;left:2774px;top:1098.24px;font-size:25px;line-height:25px;color:#4a596b;font-weight:normal;white-space:nowrap;transform-origin:0 0;transform:scaleX(0.9708);z-index:21;">15</div>
<div class="tx" style="position:absolute;left:2748.5px;top:1170.84px;font-size:25px;line-height:25px;color:#5b5540;font-weight:normal;white-space:nowrap;transform-origin:0 0;transform:scaleX(1.0072);z-index:21;">First Button Icon Name</div>
<div style="position:absolute;left:2748px;top:1206px;width:119px;height:62px;border:2px solid #857e60;border-radius:8px;box-sizing:border-box;z-index:21;"></div>
<svg style="position:absolute;left:2766px;top:1213px;z-index:21;" width="48" height="48" viewBox="0 0 48 48"><rect x="0.5" y="0.5" width="47" height="47" fill="none" stroke="#ddd6bd" stroke-width="1"/><path d="M1.5 46.5 L46.5 1.5" stroke="#ff1e0c" stroke-width="3.6"/></svg>
<svg style="position:absolute;left:2826px;top:1231px;z-index:21;" width="20" height="14" viewBox="0 0 20 14"><path d="M0 0 H20 L10 13 Z" fill="#857e60"/></svg>
<div style="position:absolute;left:2877px;top:1206px;width:382px;height:62px;border:2px solid #857e60;border-radius:8px;box-sizing:border-box;z-index:21;"></div>
<div class="tx" style="position:absolute;left:2748.5px;top:1298.84px;font-size:25px;line-height:25px;color:#5b5540;font-weight:normal;white-space:nowrap;transform-origin:0 0;transform:scaleX(1.0131);z-index:21;">First Button Label</div>
<div style="position:absolute;left:2748px;top:1334px;width:588px;height:62px;border:2px solid #857e60;border-radius:8px;box-sizing:border-box;z-index:21;"></div>
<div class="tx" style="position:absolute;left:2748.5px;top:1426.84px;font-size:25px;line-height:25px;color:#5b5540;font-weight:normal;white-space:nowrap;transform-origin:0 0;transform:scaleX(1.0066);z-index:21;">Last Button Icon Name</div>
<div style="position:absolute;left:2748px;top:1462px;width:119px;height:62px;border:2px solid #857e60;border-radius:8px;box-sizing:border-box;z-index:21;"></div>
<svg style="position:absolute;left:2766px;top:1469px;z-index:21;" width="48" height="48" viewBox="0 0 48 48"><rect x="0.5" y="0.5" width="47" height="47" fill="none" stroke="#ddd6bd" stroke-width="1"/><path d="M1.5 46.5 L46.5 1.5" stroke="#ff1e0c" stroke-width="3.6"/></svg>
<svg style="position:absolute;left:2826px;top:1487px;z-index:21;" width="20" height="14" viewBox="0 0 20 14"><path d="M0 0 H20 L10 13 Z" fill="#857e60"/></svg>
<div style="position:absolute;left:2877px;top:1462px;width:382px;height:62px;border:2px solid #857e60;border-radius:8px;box-sizing:border-box;z-index:21;"></div>
<div class="tx" style="position:absolute;left:2748.5px;top:1554.84px;font-size:25px;line-height:25px;color:#5b5540;font-weight:normal;white-space:nowrap;transform-origin:0 0;transform:scaleX(1.0113);z-index:21;">Last Button Label</div>
<div style="position:absolute;left:2748px;top:1590px;width:588px;height:62px;border:2px solid #857e60;border-radius:8px;box-sizing:border-box;z-index:21;"></div>
<div class="tx" style="position:absolute;left:2748.5px;top:1682.84px;font-size:25px;line-height:25px;color:#5b5540;font-weight:normal;white-space:nowrap;transform-origin:0 0;transform:scaleX(1.0059);z-index:21;">Next Button Icon Name</div>
<div style="position:absolute;left:2748px;top:1718px;width:119px;height:62px;border:2px solid #857e60;border-radius:8px;box-sizing:border-box;z-index:21;"></div>
<svg style="position:absolute;left:2766px;top:1725px;z-index:21;" width="48" height="48" viewBox="0 0 48 48"><rect x="0.5" y="0.5" width="47" height="47" fill="none" stroke="#ddd6bd" stroke-width="1"/><path d="M1.5 46.5 L46.5 1.5" stroke="#ff1e0c" stroke-width="3.6"/></svg>
<svg style="position:absolute;left:2826px;top:1743px;z-index:21;" width="20" height="14" viewBox="0 0 20 14"><path d="M0 0 H20 L10 13 Z" fill="#857e60"/></svg>
<div style="position:absolute;left:2877px;top:1718px;width:382px;height:62px;border:2px solid #857e60;border-radius:8px;box-sizing:border-box;z-index:21;"></div>
<div class="tx" style="position:absolute;left:2748.5px;top:1810.84px;font-size:25px;line-height:25px;color:#5b5540;font-weight:normal;white-space:nowrap;transform-origin:0 0;transform:scaleX(1.0138);z-index:21;">Next Button Label</div>
<div style="position:absolute;left:2748px;top:1846px;width:588px;height:62px;border:2px solid #857e60;border-radius:8px;box-sizing:border-box;z-index:21;"></div>
<div class="tx" style="position:absolute;left:2748.5px;top:1938.84px;font-size:25px;line-height:25px;color:#5b5540;font-weight:normal;white-space:nowrap;transform-origin:0 0;transform:scaleX(1.0022);z-index:21;">Previous Button Icon Name</div>
<div style="position:absolute;left:2748px;top:1974px;width:119px;height:62px;border:2px solid #857e60;border-radius:8px;box-sizing:border-box;z-index:21;"></div>
<svg style="position:absolute;left:2766px;top:1981px;z-index:21;" width="48" height="48" viewBox="0 0 48 48"><rect x="0.5" y="0.5" width="47" height="47" fill="none" stroke="#ddd6bd" stroke-width="1"/><path d="M1.5 46.5 L46.5 1.5" stroke="#ff1e0c" stroke-width="3.6"/></svg>
<svg style="position:absolute;left:2826px;top:1999px;z-index:21;" width="20" height="14" viewBox="0 0 20 14"><path d="M0 0 H20 L10 13 Z" fill="#857e60"/></svg>
<div style="position:absolute;left:2877px;top:1974px;width:382px;height:62px;border:2px solid #857e60;border-radius:8px;box-sizing:border-box;z-index:21;"></div>
<div class="tx" style="position:absolute;left:2748.5px;top:2066.84px;font-size:25px;line-height:25px;color:#5b5540;font-weight:normal;white-space:nowrap;transform-origin:0 0;transform:scaleX(1.0057);z-index:21;">Previous Button Label</div>
<div style="position:absolute;left:2748px;top:2102px;width:588px;height:62px;border:2px solid #857e60;border-radius:8px;box-sizing:border-box;z-index:21;"></div>
<div style="position:absolute;left:2732px;top:2212px;width:620px;height:2px;background:#c9c9c9;z-index:21;"></div>
<svg style="position:absolute;left:2756px;top:2245px;z-index:21;" width="24" height="32" viewBox="0 0 24 32"><path d="M5 3 L17 15.5 L5 28" fill="none" stroke="#032d60" stroke-width="4"/></svg>
<div class="tx" style="position:absolute;left:2797px;top:2244.14px;font-size:27px;line-height:27px;color:#032d60;font-weight:bold;white-space:nowrap;transform-origin:0 0;transform:scaleX(0.9619);z-index:21;">Pill Container Options</div>
<div style="position:absolute;left:2732px;top:2310px;width:620px;height:2px;background:#c9c9c9;z-index:21;"></div>
<svg style="position:absolute;left:2756px;top:2343px;z-index:21;" width="24" height="32" viewBox="0 0 24 32"><path d="M5 3 L17 15.5 L5 28" fill="none" stroke="#032d60" stroke-width="4"/></svg>
<div class="tx" style="position:absolute;left:2797px;top:2342.14px;font-size:27px;line-height:27px;color:#032d60;font-weight:bold;white-space:nowrap;transform-origin:0 0;transform:scaleX(0.9560);z-index:21;">Search Engine Options</div>
<div style="position:absolute;left:2732px;top:2408px;width:620px;height:2px;background:#c9c9c9;z-index:21;"></div>
<svg style="position:absolute;left:2756px;top:2441px;z-index:21;" width="24" height="32" viewBox="0 0 24 32"><path d="M5 3 L17 15.5 L5 28" fill="none" stroke="#032d60" stroke-width="4"/></svg>
<div class="tx" style="position:absolute;left:2797px;top:2440.14px;font-size:27px;line-height:27px;color:#032d60;font-weight:bold;white-space:nowrap;transform-origin:0 0;transform:scaleX(0.9606);z-index:21;">Filtering Options</div>
<svg style="position:absolute;left:0;top:0;z-index:30;pointer-events:none" width="3618" height="2500" viewBox="0 0 3618 2500">
<path id="arrowpath" d="M2743.9 1015.8 L2734.6 1015.2 L2725.2 1014.7 L2715.8 1014.1 L2706.3 1013.6 L2696.8 1013.0 L2687.3 1012.5 L2677.7 1012.1 L2668.1 1011.7 L2658.5 1011.3 L2648.8 1010.9 L2639.2 1010.7 L2629.5 1010.4 L2619.8 1010.3 L2610.1 1010.2 L2600.3 1010.2 L2590.6 1010.2 L2580.9 1010.3 L2571.2 1010.6 L2561.5 1010.9 L2551.7 1011.3 L2542.0 1011.8 L2532.4 1012.4 L2522.7 1013.1 L2513.0 1014.0 L2503.4 1014.9 L2493.8 1016.0 L2484.2 1017.2 L2474.7 1018.6 L2465.2 1020.1 L2455.7 1021.7 L2446.3 1023.5 L2436.9 1025.4 L2427.6 1027.5 L2418.3 1029.8 L2409.1 1032.2 L2399.9 1034.8 L2390.8 1037.6 L2381.8 1040.5 L2372.8 1043.6 L2363.8 1046.9 L2354.9 1050.3 L2346.1 1053.9 L2337.3 1057.6 L2328.6 1061.4 L2320.0 1065.5 L2311.4 1069.6 L2302.9 1073.9 L2294.4 1078.3 L2286.1 1082.9 L2277.7 1087.6 L2269.5 1092.4 L2261.3 1097.4 L2253.2 1102.5 L2245.1 1107.7 L2237.1 1113.0 L2229.2 1118.4 L2221.4 1123.9 L2213.6 1129.6 L2205.9 1135.3 L2198.3 1141.2 L2190.7 1147.2 L2183.2 1153.2 L2175.8 1159.4 L2168.5 1165.6 L2161.2 1172.0 L2154.0 1178.4 L2146.9 1184.9 L2139.9 1191.5 L2133.0 1198.1 L2126.1 1204.9 L2119.3 1211.7 L2112.6 1218.6 L2106.0 1225.5 L2099.4 1232.5 L2093.0 1239.6 L2086.6 1246.8 L2080.3 1254.0 L2074.0 1261.2 L2067.8 1268.6 L2061.7 1275.9 L2055.7 1283.4 L2049.7 1290.9 L2043.8 1298.4 L2038.0 1306.0 L2032.2 1313.7 L2026.4 1321.4 L2020.8 1329.1 L2015.2 1336.9 L2009.6 1344.7 L2004.1 1352.6 L1998.6 1360.5 L1993.2 1368.4 L1987.9 1376.4 L1982.5 1384.4 L1977.3 1392.5 L1972.0 1400.6 L1966.8 1408.7 L1961.7 1416.8 L1956.6 1425.0 L1951.5 1433.2 L1946.4 1441.5 L1941.4 1449.7 L1936.4 1458.0 L1931.5 1466.3 L1926.5 1474.6 L1921.6 1482.9 L1916.7 1491.3 L1911.9 1499.7 L1907.0 1508.0 L1902.2 1516.4 L1897.4 1524.8 L1892.6 1533.2 L1887.8 1541.7 L1883.0 1550.1 L1878.2 1558.5 L1873.5 1566.9 L1868.7 1575.4 L1864.0 1583.8 L1859.2 1592.2 L1854.5 1600.7 L1849.7 1609.1 L1845.0 1617.5 L1840.2 1625.9 L1835.5 1634.3 L1830.7 1642.7 L1825.9 1651.1 L1821.1 1659.5 L1816.3 1667.8 L1811.5 1676.2 L1806.7 1684.5 L1801.9 1692.9 L1797.1 1701.2 L1792.3 1709.5 L1787.5 1717.8 L1782.6 1726.2 L1777.8 1734.5 L1773.0 1742.8 L1768.2 1751.1 L1763.3 1759.4 L1758.5 1767.6 L1753.7 1775.9 L1748.8 1784.2 L1744.0 1792.5 L1739.2 1800.8 L1734.3 1809.0 L1729.5 1817.3 L1724.7 1825.6 L1719.8 1833.9 L1715.0 1842.2 L1710.2 1850.4 L1705.4 1858.7 L1700.6 1867.0 L1695.8 1875.3 L1691.0 1883.6 L1686.2 1891.8 L1681.4 1900.1 L1676.6 1908.4 L1671.8 1916.7 L1667.1 1925.0 L1662.3 1933.3 L1657.6 1941.6 L1652.8 1950.0 L1648.1 1958.3 L1643.4 1966.6 L1638.7 1975.0 L1634.0 1983.3 L1629.3 1991.7 L1624.6 2000.0 L1619.9 2008.4 L1615.3 2016.8 L1610.7 2025.2 L1606.0 2033.6 L1601.4 2042.0 L1596.8 2050.4 L1592.2 2058.8 L1587.7 2067.3 L1583.1 2075.8 L1578.6 2084.2 L1574.1 2092.7 L1569.6 2101.2 L1565.1 2109.7 L1560.6 2118.3 L1556.2 2126.8 L1551.8 2135.4 L1547.4 2143.9 L1543.0 2152.5 L1538.6 2161.1 L1534.3 2169.8 L1529.9 2178.4 L1525.6 2187.1 L1521.3 2195.8 L1517.1 2204.4 L1512.8 2213.2 L1508.6 2221.9 L1504.4 2230.7 L1500.3 2239.4 L1496.1 2248.2 L1492.0 2257.1 L1487.9 2265.9" stroke-linejoin="round" fill="none" stroke="#f8b800" stroke-width="8" stroke-linecap="round"/>
<path d="M2747.5 1009.8 L2716 999.8 L2729.6 1011 L2729.6 1016 L2722.4 1030.2 Z" stroke="#f8b800" stroke-width="5" stroke-linejoin="round" fill="#f8b800"/>
<path d="M1484.8 2268.8 L1486.5 2236.1 L1491.3 2251.3 L1498 2255.6 L1513.6 2252.5 Z" stroke="#f8b800" stroke-width="5" stroke-linejoin="round" fill="#f8b800"/>
</svg>
</body></html>
